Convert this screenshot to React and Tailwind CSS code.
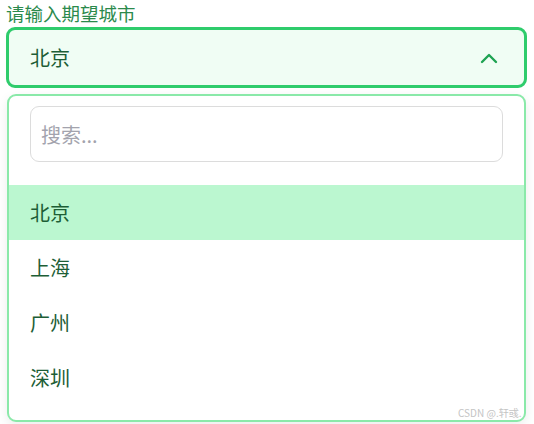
import { useState } from 'react';

const cities = ['北京', '上海', '广州', '深圳'];

export default function App() {
  const [selected] = useState('北京');

  return (
    <div
      className="relative h-[424px] w-[534px] overflow-hidden bg-white"
      style={{ fontFamily: '"Noto Sans CJK SC", "Noto Sans", sans-serif' }}
    >
      <div className="px-[6px]">
        <label className="block h-[27px] text-[18.5px] leading-[27px] text-[#2b8a4c]">请输入期望城市</label>
        <button
          type="button"
          className="flex h-[61px] w-[521px] items-center justify-between rounded-[9px] border-[3px] border-[#2fcc6c] bg-[#f0fdf4] pl-[21px] pr-[26px] text-[20px] text-[#1d5e36]"
        >
          <span>{selected}</span>
          <svg width="18" height="12" viewBox="0 0 18 12" fill="none">
            <polyline points="2,10 9,3 16,10" stroke="#1fa352" strokeWidth="2.4" strokeLinecap="round" strokeLinejoin="round" />
          </svg>
        </button>
        <div className="mt-[6px] ml-px w-[519px] rounded-[9px] border-2 border-[#8ae9a9] bg-white shadow-[0_4px_12px_rgba(0,0,0,0.08)]">
          <div className="px-[21px] pt-[10px] pb-[23px]">
            <input
              placeholder="搜索..."
              className="h-[56px] w-full rounded-[9px] border border-[#dcdcdc] px-[10px] text-[20px] text-[#1d5e36] outline-none placeholder:text-[#a3a3ad]"
            />
          </div>
          <ul className="pb-[15px]">
            {cities.map((city) => (
              <li
                key={city}
                className={`flex h-[55px] items-center px-[21px] text-[20px] text-[#1d5e36] ${
                  city === selected ? 'bg-[#bbf7d0]' : ''
                }`}
              >
                {city}
              </li>
            ))}
          </ul>
        </div>
      </div>
      <span className="absolute left-[458px] top-[405px] text-[10px] text-[#c4c4c4]">CSDN @.轩彧.</span>
    </div>
  );
}
